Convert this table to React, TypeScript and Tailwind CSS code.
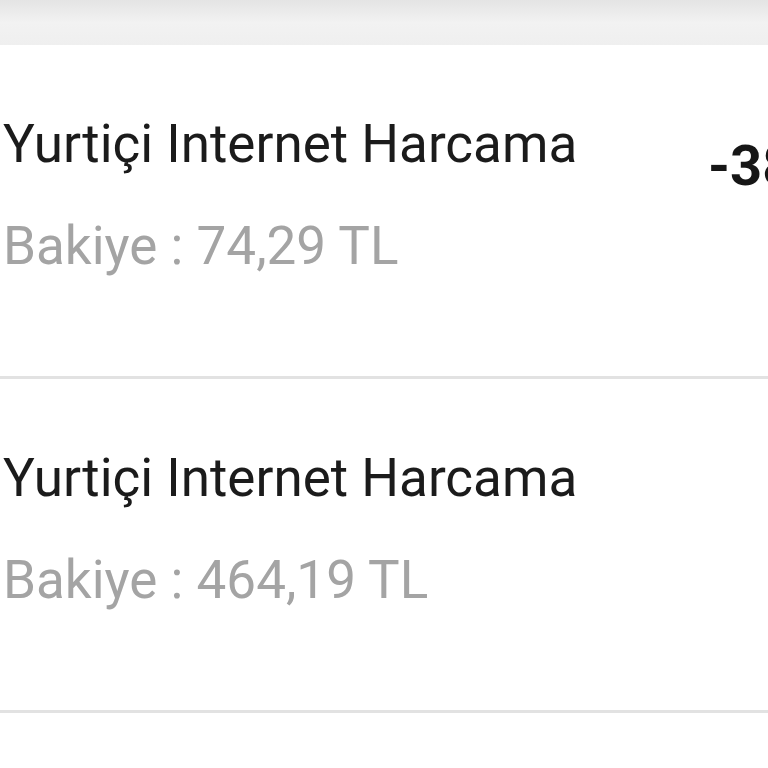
const rows = [
	{ title: "Yurtiçi Internet Harcama", balance: "Bakiye : 74,29 TL", amount: "-38,00 TL" },
	{ title: "Yurtiçi Internet Harcama", balance: "Bakiye : 464,19 TL", amount: "" },
];

export default function App() {
	return (
		<div className="w-[768px] h-[768px] overflow-hidden bg-white font-['Roboto',sans-serif]">
			<div className="h-[45px] bg-gradient-to-b from-[#e4e4e4] via-[#f2f2f2] to-[#efefef]" />
			{rows.map((row, i) => (
				<div
					key={i}
					className="h-[334px] flex border-b-[3px] border-[#e2e2e2] overflow-hidden"
				>
					<div className="w-[708px] shrink-0 pl-[3px] pt-[73px]">
						<div className="text-[53px] leading-none text-[#1b1b1b] whitespace-nowrap">
							{row.title}
						</div>
						<div className="mt-[49px] text-[53px] leading-none text-[#a4a4a4] whitespace-nowrap">
							{row.balance}
						</div>
					</div>
					{row.amount && (
						<div className="pt-[93px] text-[56px] leading-none font-bold text-[#161616] whitespace-nowrap">
							{row.amount}
						</div>
					)}
				</div>
			))}
		</div>
	);
}
